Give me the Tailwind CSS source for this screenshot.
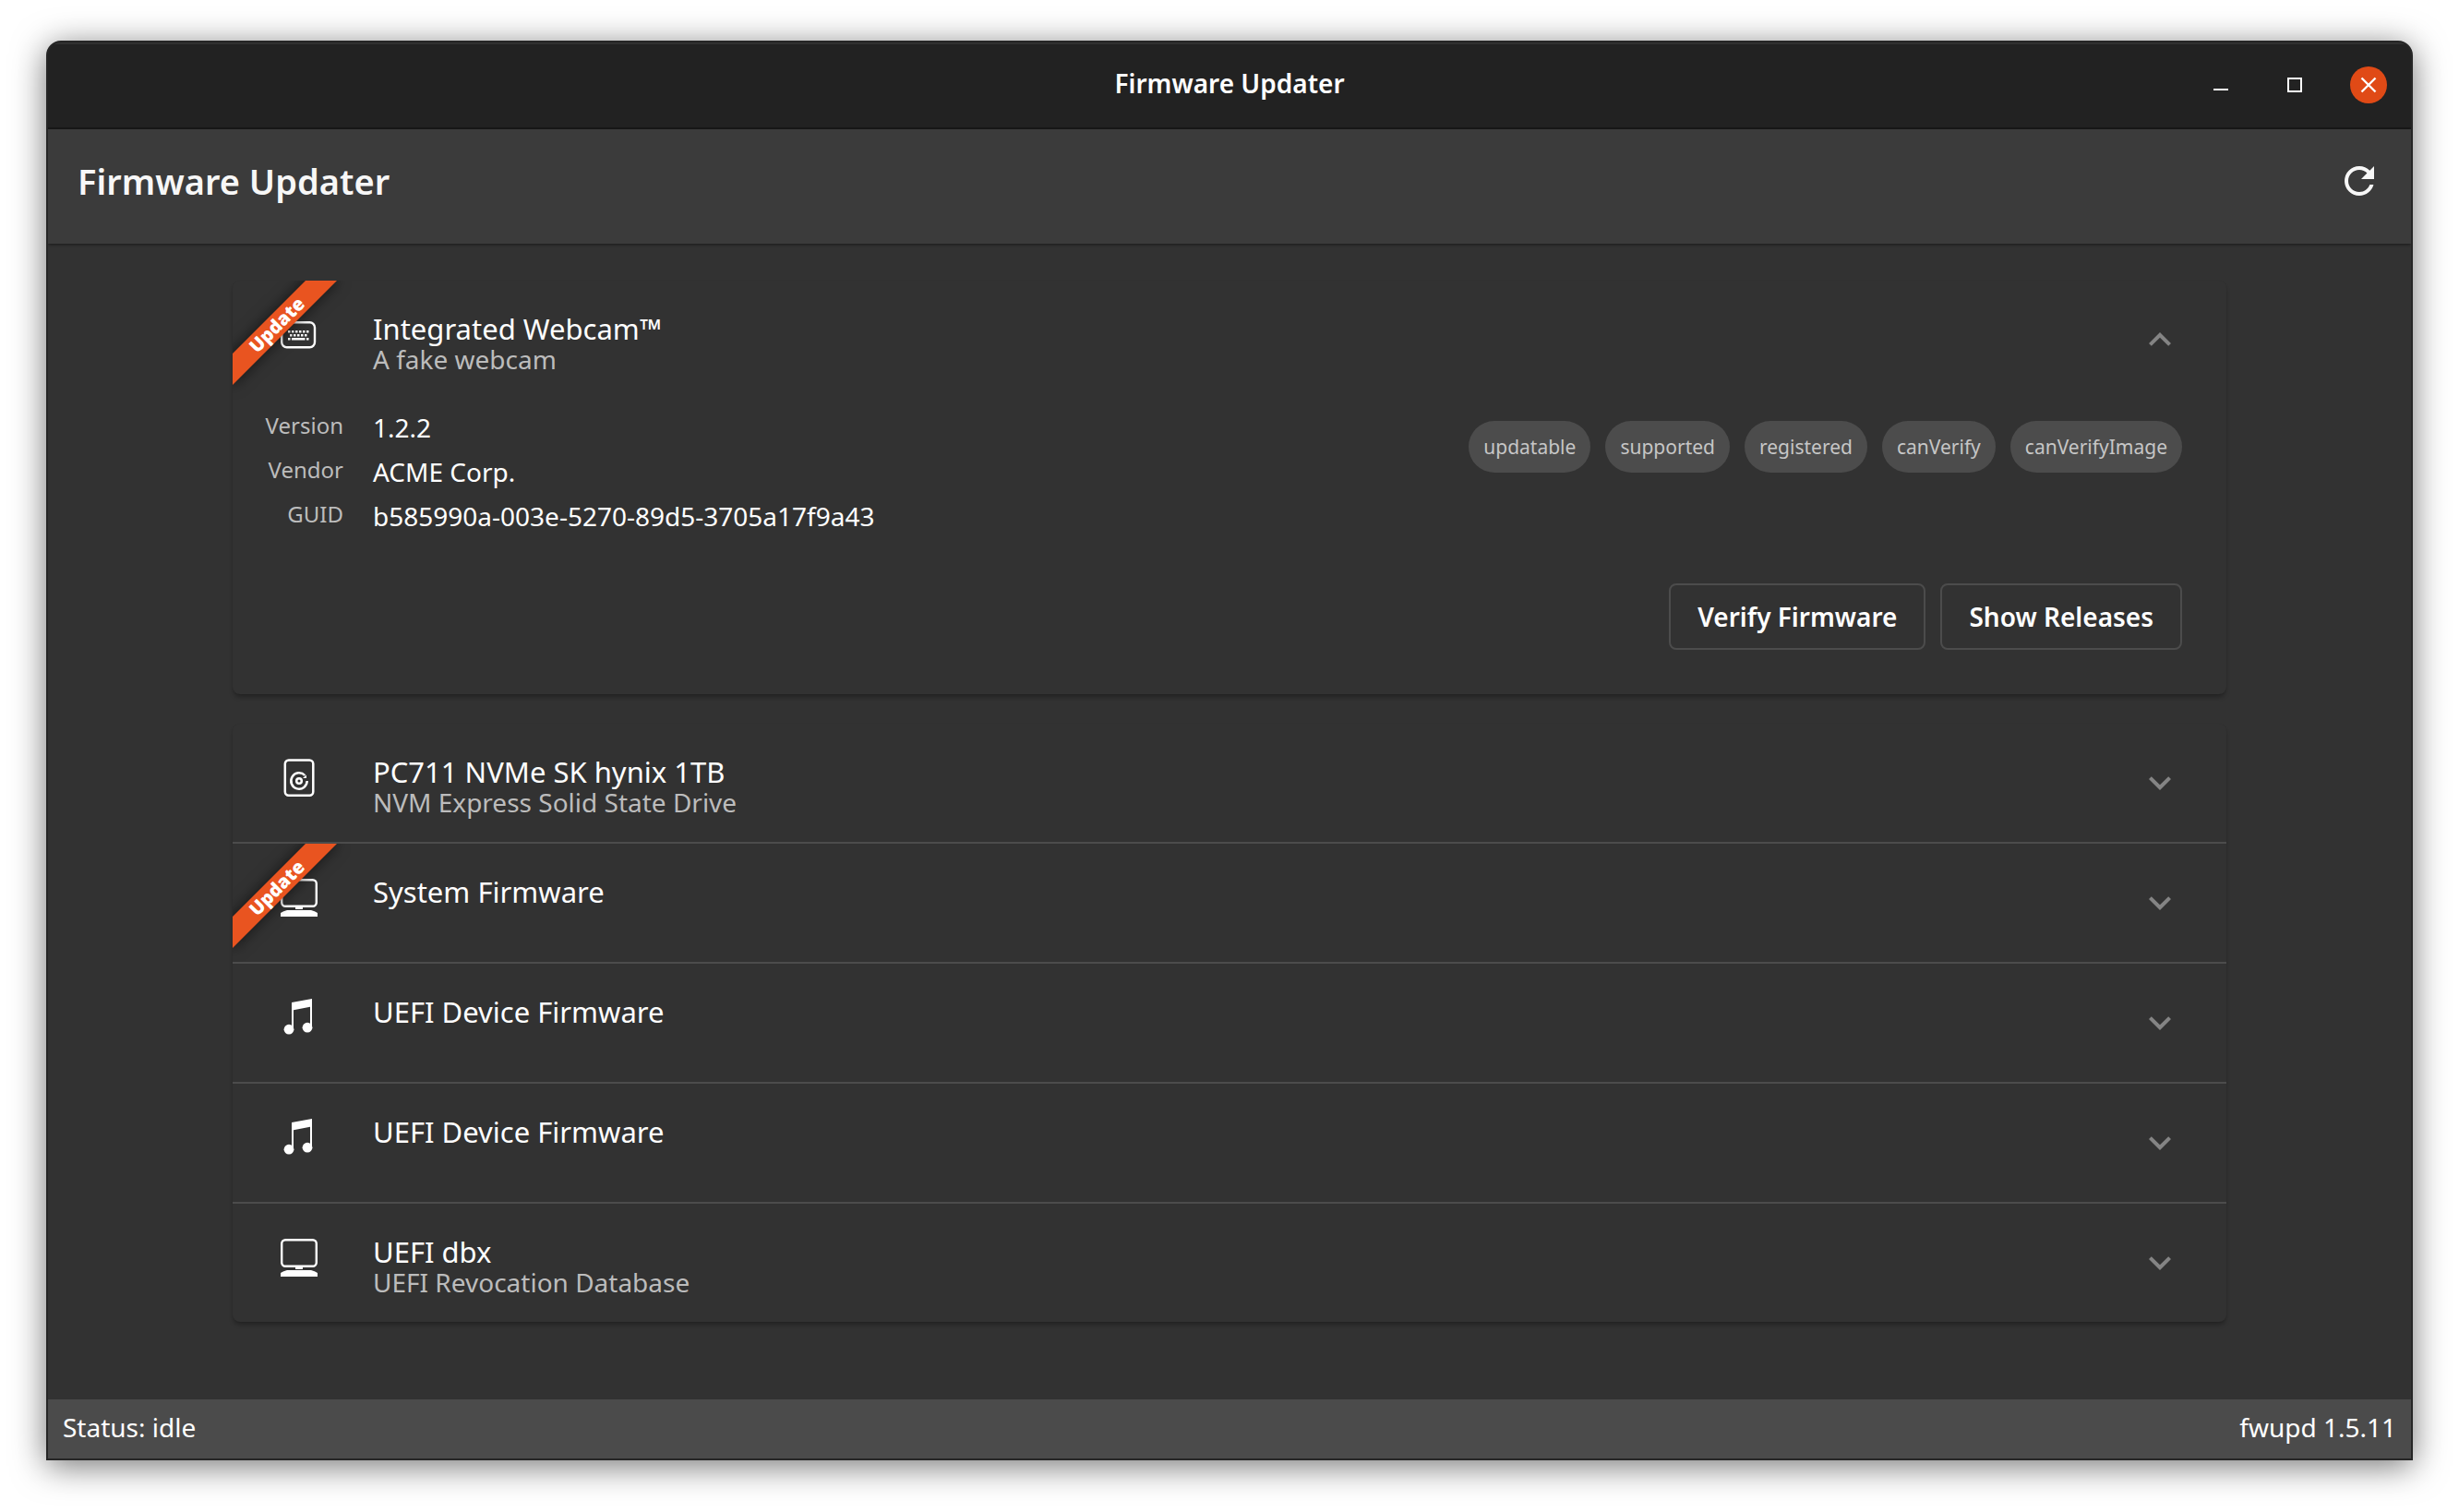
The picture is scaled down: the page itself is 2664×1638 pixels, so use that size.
<!DOCTYPE html>
<html lang="en">
<head>
<meta charset="utf-8">
<meta name="viewport" content="width=device-width, initial-scale=1">
<title>Firmware Updater</title>
<script src="https://cdn.jsdelivr.net/npm/@tailwindcss/browser@4"></script>
</head>
<body class="bg-white font-['Noto_Sans',sans-serif] text-[28px] text-white">

<!-- Shared icons -->
<svg class="hidden" aria-hidden="true">
  <symbol id="keyboard" viewBox="0 0 40 42">
    <rect x="1.2" y="7.2" width="35.8" height="27" rx="5.5" fill="none" stroke="currentColor" stroke-width="2.4"/>
    <path fill="currentColor" d="M8 16h2.5v2.5H8zM12 16h2.5v2.5H12zM16 16h2.5v2.5H16zM20 16h2.5v2.5H20zM24 16h2.5v2.5H24zM28 16h2.5v2.5H28zM10 20h2.5v2.5H10zM14 20h2.5v2.5H14zM18 20h2.5v2.5H18zM22 20h2.5v2.5H22zM26 20h2.5v2.5H26zM8 24h2.5v2.5H8zM12 24h14.5v2.5H12zM28 24h2.5v2.5H28z"/>
  </symbol>
  <symbol id="drive" viewBox="0 0 40 42">
    <g fill="none" stroke="currentColor" stroke-width="2.5">
      <rect x="4.8" y="1.5" width="30.5" height="38.2" rx="4"/>
      <path d="M28.7 24a8.7 8.7 0 1 1-2.4-6"/>
      <circle cx="20" cy="24" r="2.8"/>
    </g>
    <path fill="currentColor" d="M24 21l4-3.5v3.5z"/>
  </symbol>
  <symbol id="computer" viewBox="0 0 40 42">
    <rect x="1.2" y="1.2" width="37.6" height="28.6" rx="4" fill="none" stroke="currentColor" stroke-width="2.4"/>
    <path fill="currentColor" d="M16 30h8v3h-8zM7 34h26q4 1 7 3v4H0v-4q3-2 7-3z"/>
  </symbol>
  <symbol id="music" viewBox="0 0 40 42">
    <path fill="currentColor" d="M12 4L34 0v31h-2V8.7L14 12.2V33h-2z"/>
    <circle cx="9" cy="33.2" r="5.4" fill="currentColor"/>
    <circle cx="29" cy="31.2" r="5.4" fill="currentColor"/>
  </symbol>
  <symbol id="expand" viewBox="0 0 24 24">
    <path fill="currentColor" d="M16.59 8.59L12 13.17 7.41 8.59 6 10l6 6 6-6z"/>
  </symbol>
</svg>

<div class="flex min-h-screen flex-col px-[50px] pt-11 pb-14">
  <div class="flex grow flex-col overflow-hidden rounded-t-[16px] border-2 border-[#262626] bg-[#323232] shadow-[0_6px_36px_rgba(0,0,0,0.55)]">

    <!-- Title bar -->
    <header class="grid h-[94px] grid-cols-[1fr_auto_1fr] items-center border-b-2 border-[#191919] bg-[#222222] px-[26px] shadow-[inset_0_2px_0_#303030]">
      <div class="col-start-2 pb-1 font-semibold">Firmware Updater</div>
      <div class="flex justify-end gap-10">
        <button type="button" aria-label="Minimize" class="size-10">
          <svg viewBox="0 0 40 40" class="size-10"><path fill="#fff" d="M12 24h16v2H12z"/></svg>
        </button>
        <button type="button" aria-label="Maximize" class="size-10">
          <svg viewBox="0 0 40 40" class="size-10"><rect x="13" y="13" width="14" height="14" fill="none" stroke="#fff" stroke-width="2"/></svg>
        </button>
        <button type="button" aria-label="Close" class="size-10 rounded-full bg-[#e04a16]">
          <svg viewBox="0 0 40 40" class="size-10"><path fill="none" stroke="#fff" stroke-width="2.4" d="M12.5 12.5l15 15m0-15l-15 15"/></svg>
        </button>
      </div>
    </header>

    <!-- App bar -->
    <div class="z-10 flex h-[124px] items-center justify-between bg-[#3b3b3b] px-8 pb-3 text-[#f7f7f7] shadow-[0_1px_3px_rgba(0,0,0,0.5)]">
      <h1 class="text-[38px] font-semibold">Firmware Updater</h1>
      <button type="button" aria-label="Refresh" class="size-12">
        <svg viewBox="0 0 24 24" class="size-12"><path fill="currentColor" d="M17.65 6.35C16.2 4.9 14.21 4 12 4c-4.42 0-7.99 3.58-7.99 8s3.57 8 7.99 8c3.73 0 6.84-2.55 7.73-6h-2.08c-.82 2.33-3.04 4-5.65 4-3.31 0-6-2.69-6-6s2.69-6 6-6c1.66 0 3.14.69 4.22 1.78L13 11h7V4l-2.35 2.35z"/></svg>
      </button>
    </div>

    <main class="mx-auto flex w-full max-w-[2560px] grow flex-col gap-8 px-[200px] py-10">

      <!-- Expanded device -->
      <section class="rounded-lg shadow-[0_4px_5px_-1px_rgba(0,0,0,0.32),0_0_1px_rgba(0,0,0,0.1)]">
        <button type="button" aria-expanded="true" class="relative flex h-32 w-full items-start pr-12 pl-[52px] text-left">
          <svg class="mt-[38px] mr-[60px] h-[42px] w-10"><use href="#keyboard"/></svg>
          <span class="grow pt-9">
            <span class="block text-[31px] leading-8">Integrated Webcam™</span>
            <span class="block leading-[34px] text-[#bcbcbc]">A fake webcam</span>
          </span>
          <svg class="size-12 rotate-180 self-center text-[#848484]"><use href="#expand"/></svg>
          <span class="absolute top-0 left-0 size-36 overflow-hidden">
            <span class="absolute top-9 -left-8 h-6 w-40 -rotate-45 bg-[#e95420] text-center text-[20px] leading-6 font-black shadow-[0_0_16px_rgba(0,0,0,0.6)]">Update</span>
          </span>
        </button>
        <div class="px-8 pt-2 pb-12">
          <div class="flex items-start justify-between">
            <dl class="grid grid-cols-[88px_auto] gap-x-8">
              <dt class="h-12 text-right text-[24px] leading-[42px] text-[#bcbcbc]">Version</dt>
              <dd class="h-12 leading-[46px]">1.2.2</dd>
              <dt class="h-12 text-right text-[24px] leading-[42px] text-[#bcbcbc]">Vendor</dt>
              <dd class="h-12 leading-[46px]">ACME Corp.</dd>
              <dt class="h-12 text-right text-[24px] leading-[42px] text-[#bcbcbc]">GUID</dt>
              <dd class="h-12 leading-[46px]">b585990a-003e-5270-89d5-3705a17f9a43</dd>
            </dl>
            <ul class="mt-4 mr-4 flex gap-4 text-[21px] leading-[56px] text-[#c6c6c6]">
              <li class="rounded-full bg-[#4c4c4c] px-4">updatable</li>
              <li class="rounded-full bg-[#4c4c4c] px-4">supported</li>
              <li class="rounded-full bg-[#4c4c4c] px-4">registered</li>
              <li class="rounded-full bg-[#4c4c4c] px-4">canVerify</li>
              <li class="rounded-full bg-[#4c4c4c] px-4">canVerifyImage</li>
            </ul>
          </div>
          <div class="mt-12 mr-4 flex justify-end gap-4">
            <button type="button" class="h-[72px] rounded-lg border-2 border-[#4c4c4c] px-[29px] font-semibold">Verify Firmware</button>
            <button type="button" class="h-[72px] rounded-lg border-2 border-[#4c4c4c] px-[29px] font-semibold">Show Releases</button>
          </div>
        </div>
      </section>

      <!-- Collapsed devices -->
      <section class="divide-y-2 divide-[#4c4c4c] rounded-lg shadow-[0_4px_5px_-1px_rgba(0,0,0,0.32),0_0_1px_rgba(0,0,0,0.1)]">
        <div>
          <button type="button" aria-expanded="false" class="flex h-32 w-full items-start pr-12 pl-[52px] text-left">
            <svg class="mt-[38px] mr-[60px] h-[42px] w-10"><use href="#drive"/></svg>
            <span class="grow pt-9">
              <span class="block text-[31px] leading-8">PC711 NVMe SK hynix 1TB</span>
              <span class="block leading-[34px] text-[#bcbcbc]">NVM Express Solid State Drive</span>
            </span>
            <svg class="size-12 self-center text-[#848484]"><use href="#expand"/></svg>
          </button>
        </div>
        <div>
          <button type="button" aria-expanded="false" class="relative flex h-32 w-full items-start pr-12 pl-[52px] text-left">
            <svg class="mt-[38px] mr-[60px] h-[42px] w-10"><use href="#computer"/></svg>
            <span class="grow pt-9">
              <span class="block text-[31px] leading-8">System Firmware</span>
            </span>
            <svg class="size-12 self-center text-[#848484]"><use href="#expand"/></svg>
            <span class="absolute top-0 left-0 size-32 overflow-hidden">
              <span class="absolute top-9 -left-8 h-6 w-40 -rotate-45 bg-[#e95420] text-center text-[20px] leading-6 font-black shadow-[0_0_16px_rgba(0,0,0,0.6)]">Update</span>
            </span>
          </button>
        </div>
        <div>
          <button type="button" aria-expanded="false" class="flex h-32 w-full items-start pr-12 pl-[52px] text-left">
            <svg class="mt-[38px] mr-[60px] h-[42px] w-10"><use href="#music"/></svg>
            <span class="grow pt-9">
              <span class="block text-[31px] leading-8">UEFI Device Firmware</span>
            </span>
            <svg class="size-12 self-center text-[#848484]"><use href="#expand"/></svg>
          </button>
        </div>
        <div>
          <button type="button" aria-expanded="false" class="flex h-32 w-full items-start pr-12 pl-[52px] text-left">
            <svg class="mt-[38px] mr-[60px] h-[42px] w-10"><use href="#music"/></svg>
            <span class="grow pt-9">
              <span class="block text-[31px] leading-8">UEFI Device Firmware</span>
            </span>
            <svg class="size-12 self-center text-[#848484]"><use href="#expand"/></svg>
          </button>
        </div>
        <div>
          <button type="button" aria-expanded="false" class="flex h-32 w-full items-start pr-12 pl-[52px] text-left">
            <svg class="mt-[38px] mr-[60px] h-[42px] w-10"><use href="#computer"/></svg>
            <span class="grow pt-9">
              <span class="block text-[31px] leading-8">UEFI dbx</span>
              <span class="block leading-[34px] text-[#bcbcbc]">UEFI Revocation Database</span>
            </span>
            <svg class="size-12 self-center text-[#848484]"><use href="#expand"/></svg>
          </button>
        </div>
      </section>
    </main>

    <footer class="flex h-16 items-center justify-between bg-[#4b4b4b] px-4 pb-1">
      <span>Status: idle</span>
      <span>fwupd 1.5.11</span>
    </footer>
  </div>
</div>
</body>
</html>
